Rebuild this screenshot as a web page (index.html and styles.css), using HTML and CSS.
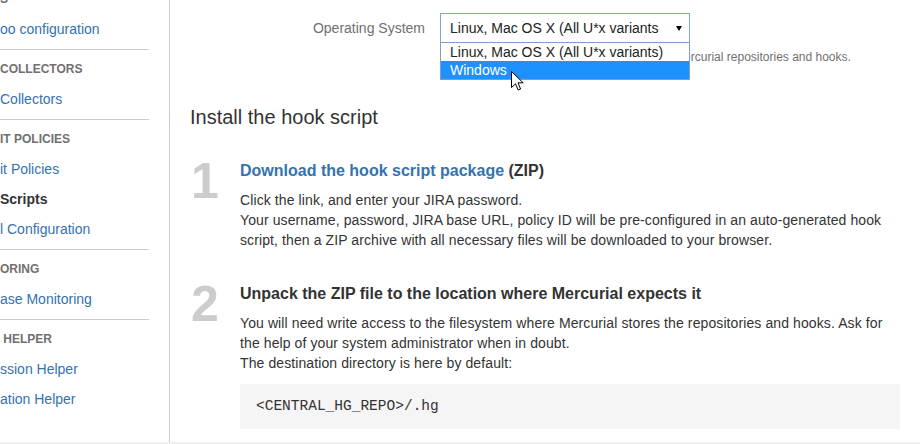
FILE: index.html
```html
<!DOCTYPE html>
<html>
<head>
<meta charset="utf-8">
<link rel="stylesheet" href="styles.css">
</head>
<body>
<div class="page">
  <aside class="sidebar">
    <div class="nav">
      <div class="group">
        <div class="heading">S</div>
        <a class="link">oo configuration</a>
      </div>
      <div class="group">
        <div class="heading">COLLECTORS</div>
        <a class="link">Collectors</a>
      </div>
      <div class="group">
        <div class="heading">IT POLICIES</div>
        <a class="link">it Policies</a>
        <a class="link current">Scripts</a>
        <a class="link">l Configuration</a>
      </div>
      <div class="group">
        <div class="heading">ORING</div>
        <a class="link">ase Monitoring</a>
      </div>
      <div class="group last">
        <div class="heading">&nbsp;HELPER</div>
        <a class="link">ssion Helper</a>
        <a class="link">ation Helper</a>
      </div>
    </div>
  </aside>
  <main class="main">
    <div class="form-row">
      <div class="label">Operating System</div>
      <div class="field">
        <div class="select"><span class="select-text">Linux, Mac OS X (All U*x variants</span><i class="arrow"></i></div>
        <div class="desc">Enter the operating system of the server for Mercurial repositories and hooks.</div>
        <ul class="dropdown">
          <li class="option">Linux, Mac OS X (All U*x variants)</li>
          <li class="option active">Windows</li>
        </ul>
        <svg class="cursor" width="14" height="21" viewBox="0 0 14 21"><path d="M0.5 0.5 L0.5 16.5 L4.5 12.8 L7.2 19 L9.6 18 L7 11.8 L12.2 11.8 Z" fill="#fff" stroke="#000" stroke-width="1" stroke-linejoin="miter"/></svg>
      </div>
    </div>

    <h2 class="section-title">Install the hook script</h2>

    <div class="step step-first">
      <div class="num">1</div>
      <div class="step-body">
        <div class="step-title"><a class="step-link">Download the hook script package</a> (ZIP)</div>
        <p class="text">Click the link, and enter your JIRA password.<br>Your username, password, JIRA base URL, policy ID will be pre-configured in an auto-generated hook script, then a ZIP archive with all necessary files will be downloaded to your browser.</p>
      </div>
    </div>

    <div class="step step-second">
      <div class="num">2</div>
      <div class="step-body">
        <div class="step-title">Unpack the ZIP file to the location where Mercurial expects it</div>
        <p class="text">You will need write access to the filesystem where Mercurial stores the repositories and hooks. Ask for the help of your system administrator when in doubt.<br>The destination directory is here by default:</p>
        <pre class="code">&lt;CENTRAL_HG_REPO&gt;/.hg</pre>
      </div>
    </div>
  </main>
</div>
</body>
</html>
```

FILE: styles.css
```css
html {
  background: #f0f0f0;
}
body {
  margin: 0;
  font-family: "Liberation Sans", Arial, sans-serif;
  font-size: 14px;
  color: #333;
}
.page {
  height: 442px;
  overflow: hidden;
  background: #fff;
  display: flex;
  align-items: stretch;
}
.sidebar {
  width: 149px;
  flex: none;
  padding-right: 20px;
  border-right: 1px solid #cccccc;
  overflow: hidden;
}
.nav {
  margin-top: -20px;
}
.group {
  padding: 4px 0 5px;
  border-bottom: 1px solid #cccccc;
  display: flex;
  flex-direction: column;
}
.group.last {
  border-bottom: none;
}
.heading {
  font-size: 12px;
  font-weight: bold;
  color: #707070;
  line-height: 30px;
  white-space: nowrap;
}
.link {
  color: #3572b0;
  line-height: 30px;
  white-space: nowrap;
}
.link.current {
  color: #333;
  font-weight: bold;
}
.main {
  flex: 1;
  padding: 0 20px;
  min-width: 0;
}
.form-row {
  display: flex;
  margin-top: 13px;
}
.label {
  width: 250px;
  flex: none;
  padding-right: 15px;
  box-sizing: border-box;
  text-align: right;
  color: #707070;
  line-height: 30px;
}
.field {
  position: relative;
  flex: 1;
}
.select {
  width: 250px;
  height: 30px;
  box-sizing: border-box;
  border: 1px solid #80a6d6;
  display: flex;
  align-items: center;
  justify-content: space-between;
  padding: 0 7px 0 9px;
  background: #fff;
  overflow: hidden;
}
.select-text {
  white-space: nowrap;
  overflow: hidden;
  color: #222;
}
.arrow {
  flex: none;
  width: 0;
  height: 0;
  margin-left: 4px;
  margin-top: 1px;
  border-left: 3px solid transparent;
  border-right: 3px solid transparent;
  border-top: 5px solid #000;
}
.desc {
  margin-top: 5px;
  font-size: 12px;
  line-height: 18px;
  color: #707070;
  white-space: nowrap;
}
.dropdown {
  position: absolute;
  left: 0;
  top: 29px;
  width: 250px;
  box-sizing: border-box;
  margin: 0;
  padding: 0;
  list-style: none;
  border: 1px solid #7f9ccc;
  background: #fff;
}
.option {
  height: 18px;
  line-height: 18px;
  padding-left: 9px;
  color: #222;
  white-space: nowrap;
}
.option.active {
  background: #1e90ff;
  color: #fff;
}
.cursor {
  position: absolute;
  left: 71px;
  top: 58px;
}
.section-title {
  margin: 36px 0 0;
  font-size: 20px;
  font-weight: normal;
  line-height: 30px;
  color: #333;
}
.step {
  display: flex;
}
.step-first {
  margin-top: 29px;
}
.step-second {
  margin-top: 34px;
}
.num {
  width: 50px;
  flex: none;
  font-size: 50px;
  font-weight: bold;
  line-height: 50px;
  color: #cccccc;
  margin-top: -5px;
  padding-left: 1px;
  box-sizing: border-box;
}
.step-body {
  flex: 1;
  min-width: 0;
}
.step-title {
  font-size: 16px;
  font-weight: bold;
  line-height: 20px;
  color: #333;
}
.step-link {
  color: #3572b0;
}
.text {
  margin: 9px 0 0;
  line-height: 20px;
  letter-spacing: 0.1px;
}
.code {
  margin: 11px 0 0;
  height: 45px;
  box-sizing: border-box;
  padding: 0 16px;
  background: #f5f5f5;
  font-family: "Liberation Mono", "DejaVu Sans Mono", monospace;
  font-size: 14.5px;
  line-height: 45px;
  color: #333;
}
```
